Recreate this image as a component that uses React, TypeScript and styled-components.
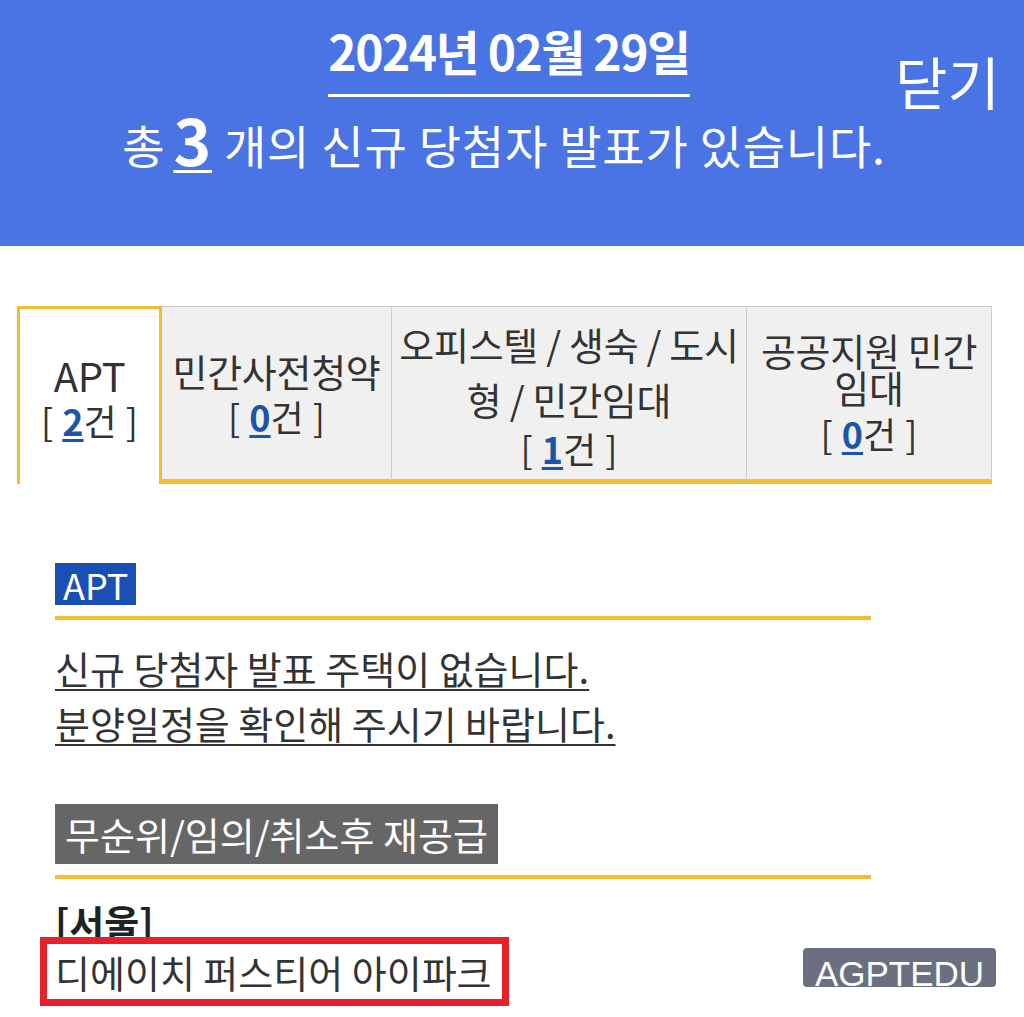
import React from "react";
import styled, { createGlobalStyle } from "styled-components";

const GlobalStyle = createGlobalStyle`
  html, body {
    margin: 0;
    padding: 0;
    background: #ffffff;
  }
  body {
    font-family: "Noto Sans CJK KR", "Noto Sans", sans-serif;
    color: #333333;
  }
`;

const Page = styled.div`
  position: relative;
  width: 1024px;
  height: 1017px;
  overflow: hidden;
  background: #ffffff;
`;

const Header = styled.header`
  position: relative;
  height: 246px;
  background: #4a74e3;
  color: #ffffff;
  display: flex;
  flex-direction: column;
  align-items: center;
  padding-top: 18px;
  box-sizing: border-box;
`;

const DateTitle = styled.h1`
  margin: 0 0 0 -6px;
  font-size: 48px;
  font-weight: 700;
  line-height: 64px;
  letter-spacing: -1.5px;
  padding-bottom: 12px;
  border-bottom: 3px solid #ffffff;
`;

const Summary = styled.p`
  margin: 8px 0 0 -16px;
  font-size: 46px;
  line-height: 66px;
  font-weight: 400;
  letter-spacing: 0.8px;

  b {
    font-size: 64px;
    font-weight: 700;
    text-decoration: underline;
    text-underline-offset: 4px;
    text-decoration-thickness: 3px;
    margin: 0 12px 0 8px;
    vertical-align: -2px;
  }
`;

const CloseButton = styled.button`
  position: absolute;
  top: 40px;
  right: 24px;
  background: none;
  border: none;
  padding: 0;
  color: #ffffff;
  font-family: inherit;
  font-size: 57px;
  font-weight: 400;
  line-height: 80px;
  cursor: pointer;
`;

const Tabs = styled.nav`
  display: flex;
  margin: 60px 0 0 17px;
  width: 975px;
  height: 178px;
`;

const Tab = styled.div<{ $active?: boolean; $width: number }>`
  width: ${(p) => p.$width}px;
  box-sizing: border-box;
  display: flex;
  flex-direction: column;
  align-items: center;
  justify-content: center;
  text-align: center;
  color: #333333;
  background: ${(p) => (p.$active ? "#ffffff" : "#f0f0f0")};
  border: ${(p) => (p.$active ? "3px solid #f0bd33" : "1px solid #cccccc")};
  border-bottom: ${(p) => (p.$active ? "none" : "5px solid #f0bd33")};
  ${(p) => (p.$active ? "" : "border-left: none;")}
  padding: 0 2px;
`;

const TabTitle = styled.div<{ $lh: number; $latin?: boolean }>`
  line-height: ${(p) => p.$lh}px;
  font-size: ${(p) => (p.$latin ? "40px" : "38px")};
  white-space: nowrap;
  letter-spacing: -0.3px;
`;

const TabCount = styled.div<{ $gap: number }>`
  margin-top: ${(p) => p.$gap}px;
  line-height: 44px;
  font-size: 36px;
  word-spacing: 1px;

  b {
    color: #1a55a8;
    font-weight: 700;
    text-decoration: underline;
    text-underline-offset: 3px;
  }
`;

const Content = styled.section`
  padding: 79px 0 0 55px;
  width: 816px;
`;

const Label = styled.div<{ $tone: "blue" | "gray" }>`
  display: inline-block;
  background: ${(p) => (p.$tone === "blue" ? "#1a4fb3" : "#666666")};
  color: #ffffff;
  font-size: ${(p) => (p.$tone === "blue" ? "36px" : "38px")};
  line-height: ${(p) => (p.$tone === "blue" ? "42px" : "60px")};
  padding: 0 ${(p) => (p.$tone === "blue" ? "8px" : "10px")};
`;

const Rule = styled.hr`
  margin: 11px 0 0 0;
  border: none;
  height: 4px;
  background: #f0bd33;
`;

const Notice = styled.div`
  margin-top: 20px;
  font-size: 38px;
  line-height: 55px;
  color: #333333;

  div {
    text-decoration: underline;
    text-underline-offset: 5px;
    text-decoration-thickness: 2px;
  }
`;

const Block = styled.div`
  margin-top: 54px;
`;

const Region = styled.div`
  margin-top: 20px;
  font-size: 38px;
  line-height: 46px;
  font-weight: 700;
  color: #222222;
`;

const HouseName = styled.div`
  display: inline-block;
  margin: -1px 0 0 -8px;
  padding: 0 10px 0 8px;
  font-size: 38px;
  line-height: 55px;
  color: #333333;
  outline: 7px solid #e8202a;
  background: #ffffff;
  position: relative;
`;

const Watermark = styled.div`
  position: absolute;
  left: 803px;
  top: 948px;
  width: 193px;
  height: 39px;
  border-radius: 4px;
  background: #6b7080;
  color: #ffffff;
  font-family: "Liberation Sans", Arial, sans-serif;
  font-size: 35px;
  line-height: 52px;
  text-align: center;
`;

type TabData = {
  lines: string[];
  count: number;
  width: number;
  lh: number;
  gap: number;
  active?: boolean;
  latin?: boolean;
};

const tabs: TabData[] = [
  { lines: ["APT"], count: 2, width: 145, lh: 46, gap: 0, active: true, latin: true },
  { lines: ["민간사전청약"], count: 0, width: 230, lh: 46, gap: 0 },
  { lines: ["오피스텔 / 생숙 / 도시", "형 / 민간임대"], count: 1, width: 355, lh: 55, gap: 0 },
  { lines: ["공공지원 민간", "임대"], count: 0, width: 245, lh: 37, gap: 6 },
];

export default function App() {
  return (
    <Page>
      <GlobalStyle />
      <Header>
        <DateTitle>2024년 02월 29일</DateTitle>
        <Summary>
          총<b>3</b>개의 신규 당첨자 발표가 있습니다.
        </Summary>
        <CloseButton>닫기</CloseButton>
      </Header>

      <Tabs>
        {tabs.map((t) => (
          <Tab key={t.lines.join()} $active={t.active} $width={t.width}>
            {t.lines.map((line) => (
              <TabTitle key={line} $lh={t.lh} $latin={t.latin}>
                {line}
              </TabTitle>
            ))}
            <TabCount $gap={t.gap}>
              [ <b>{t.count}</b>건 ]
            </TabCount>
          </Tab>
        ))}
      </Tabs>

      <Content>
        <Label $tone="blue">APT</Label>
        <Rule />
        <Notice>
          <div>신규 당첨자 발표 주택이 없습니다.</div>
          <div>분양일정을 확인해 주시기 바랍니다.</div>
        </Notice>

        <Block>
          <Label $tone="gray">무순위/임의/취소후 재공급</Label>
          <Rule />
          <Region>[서울]</Region>
          <HouseName>디에이치 퍼스티어 아이파크</HouseName>
        </Block>
      </Content>

      <Watermark>AGPTEDU</Watermark>
    </Page>
  );
}
